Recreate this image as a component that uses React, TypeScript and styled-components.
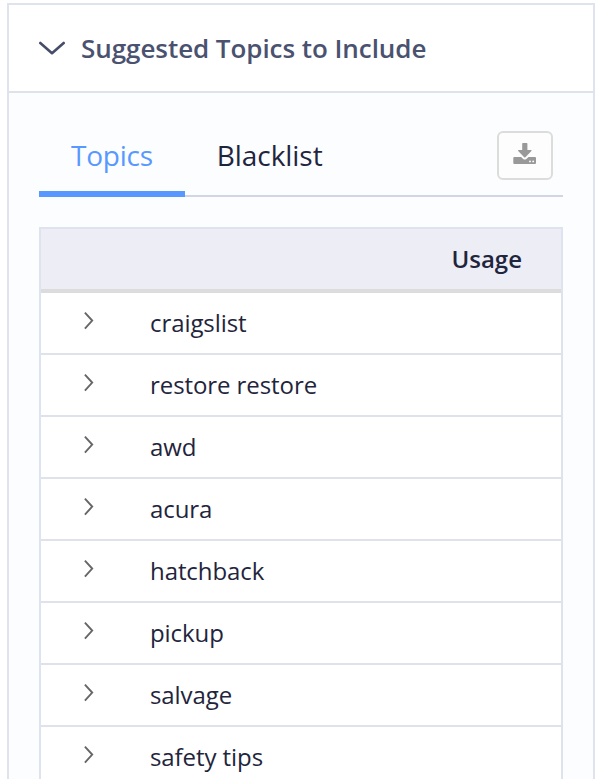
import React from 'react';
import styled, { createGlobalStyle } from 'styled-components';

const GlobalStyle = createGlobalStyle`
  * { box-sizing: border-box; }
  html, body { margin: 0; background: #fff; }
  body {
    font-family: 'Open Sans', 'Noto Sans', sans-serif;
    color: #1f253d;
  }
  #root { height: 779px; overflow: hidden; }
`;

const Page = styled.div`
  height: 779px;
  padding: 3px 10px 0 7px;
  overflow: hidden;
`;

const Panel = styled.section`
  height: 900px;
  border: 2px solid #dfe3ed;
  background: #fcfdff;
`;

const PanelHeader = styled.header`
  display: flex;
  align-items: center;
  height: 88px;
  padding: 0 30px;
  background: #fff;
  border-bottom: 2px solid #dfe1eb;
`;

const PanelTitle = styled.h2`
  margin: 0 0 0 16px;
  font-size: 26px;
  line-height: 36px;
  font-weight: 600;
  letter-spacing: -0.06px;
  color: #4a5270;
  white-space: nowrap;
`;

const PanelBody = styled.div`
  padding: 30px;
`;

const TabBar = styled.nav`
  display: flex;
  height: 74px;
  border-bottom: 2px solid #d2d6e4;
`;

const Tab = styled.button<{ $active?: boolean }>`
  height: 74px;
  padding: 0 32px 4px;
  border: 0;
  border-bottom: 6px solid ${(p) => (p.$active ? '#5898ff' : 'transparent')};
  background: none;
  font: 400 28px/38px 'Open Sans', sans-serif;
  letter-spacing: ${(p) => (p.$active ? '-0.25px' : '-0.05px')};
  color: ${(p) => (p.$active ? '#5898ff' : '#1f253d')};
  white-space: nowrap;
`;

const DownloadButton = styled.button`
  display: flex;
  width: 56px;
  height: 49px;
  margin: 8px 10px 0 auto;
  padding: 10px 0 0 14px;
  border: 2px solid #dcdcdc;
  border-radius: 6px;
  background: #fdfdfd;
`;

const Table = styled.div`
  margin-top: 30px;
  border: 2px solid #dfe3ed;
  background: #fff;
`;

const TableHeader = styled.div`
  display: flex;
  justify-content: flex-end;
  height: 64px;
  padding: 13px 39px 0 0;
  background: #ededf6;
  border-bottom: 4px solid #dcdcdc;
  font-size: 24px;
  line-height: 33px;
  font-weight: 600;
`;

const Row = styled.div`
  display: flex;
  height: 62px;
  padding: 13px 0 0 43px;
  border-bottom: 2px solid #dfe1eb;
`;

const RowLabel = styled.span`
  margin-left: 56px;
  font-size: 24px;
  line-height: 33px;
  letter-spacing: -0.08px;
  white-space: nowrap;
`;

const RowChevron = styled.svg`
  margin-top: 5px;
  flex: none;
`;

const topics = [
  'craigslist',
  'restore restore',
  'awd',
  'acura',
  'hatchback',
  'pickup',
  'salvage',
  'safety tips',
];

export default function App() {
  return (
    <>
      <GlobalStyle />
      <Page>
        <Panel>
          <PanelHeader>
            <svg width="26" height="14" viewBox="0 0 26 14" fill="none">
              <path d="M1.3 2 L13 12.2 L24.7 2" stroke="#464d69" strokeWidth="2.6" strokeLinecap="round" strokeLinejoin="round" />
            </svg>
            <PanelTitle>Suggested Topics to Include</PanelTitle>
          </PanelHeader>
          <PanelBody>
            <TabBar>
              <Tab $active>Topics</Tab>
              <Tab>Blacklist</Tab>
              <DownloadButton aria-label="Download">
                <svg width="24" height="22" viewBox="0 0 24 22" fill="#999">
                  <path d="M9.2 0.7 Q9.2 0 9.9 0 H13.7 Q14.4 0 14.4 0.7 V7 H18 Q18.9 7.1 18.4 7.9 L12.4 14.3 Q11.8 14.8 11.2 14.3 L5.2 7.9 Q4.7 7.1 5.6 7 H9.2 Z" />
                  <path d="M1.3 14 H8.1 L10.2 16 Q11.8 17.2 13.4 16 L15.5 14 H22 Q23 14 23 15 V20 Q23 21 22 21 H1.3 Q0.3 21 0.3 20 V15 Q0.3 14 1.3 14 Z" />
                  <g fill="#fdfdfd">
                    <circle cx="17" cy="18.4" r="0.95" />
                    <circle cx="20.2" cy="18.4" r="0.95" />
                  </g>
                </svg>
              </DownloadButton>
            </TabBar>
            <Table>
              <TableHeader>Usage</TableHeader>
              {topics.map((topic) => (
                <Row key={topic}>
                  <RowChevron width="10" height="19" viewBox="0 0 10 19" fill="none">
                    <path d="M0.9 1.6 L8.2 9.6 L0.9 17.6" stroke="#666" strokeWidth="1.9" />
                  </RowChevron>
                  <RowLabel>{topic}</RowLabel>
                </Row>
              ))}
            </Table>
          </PanelBody>
        </Panel>
      </Page>
    </>
  );
}
